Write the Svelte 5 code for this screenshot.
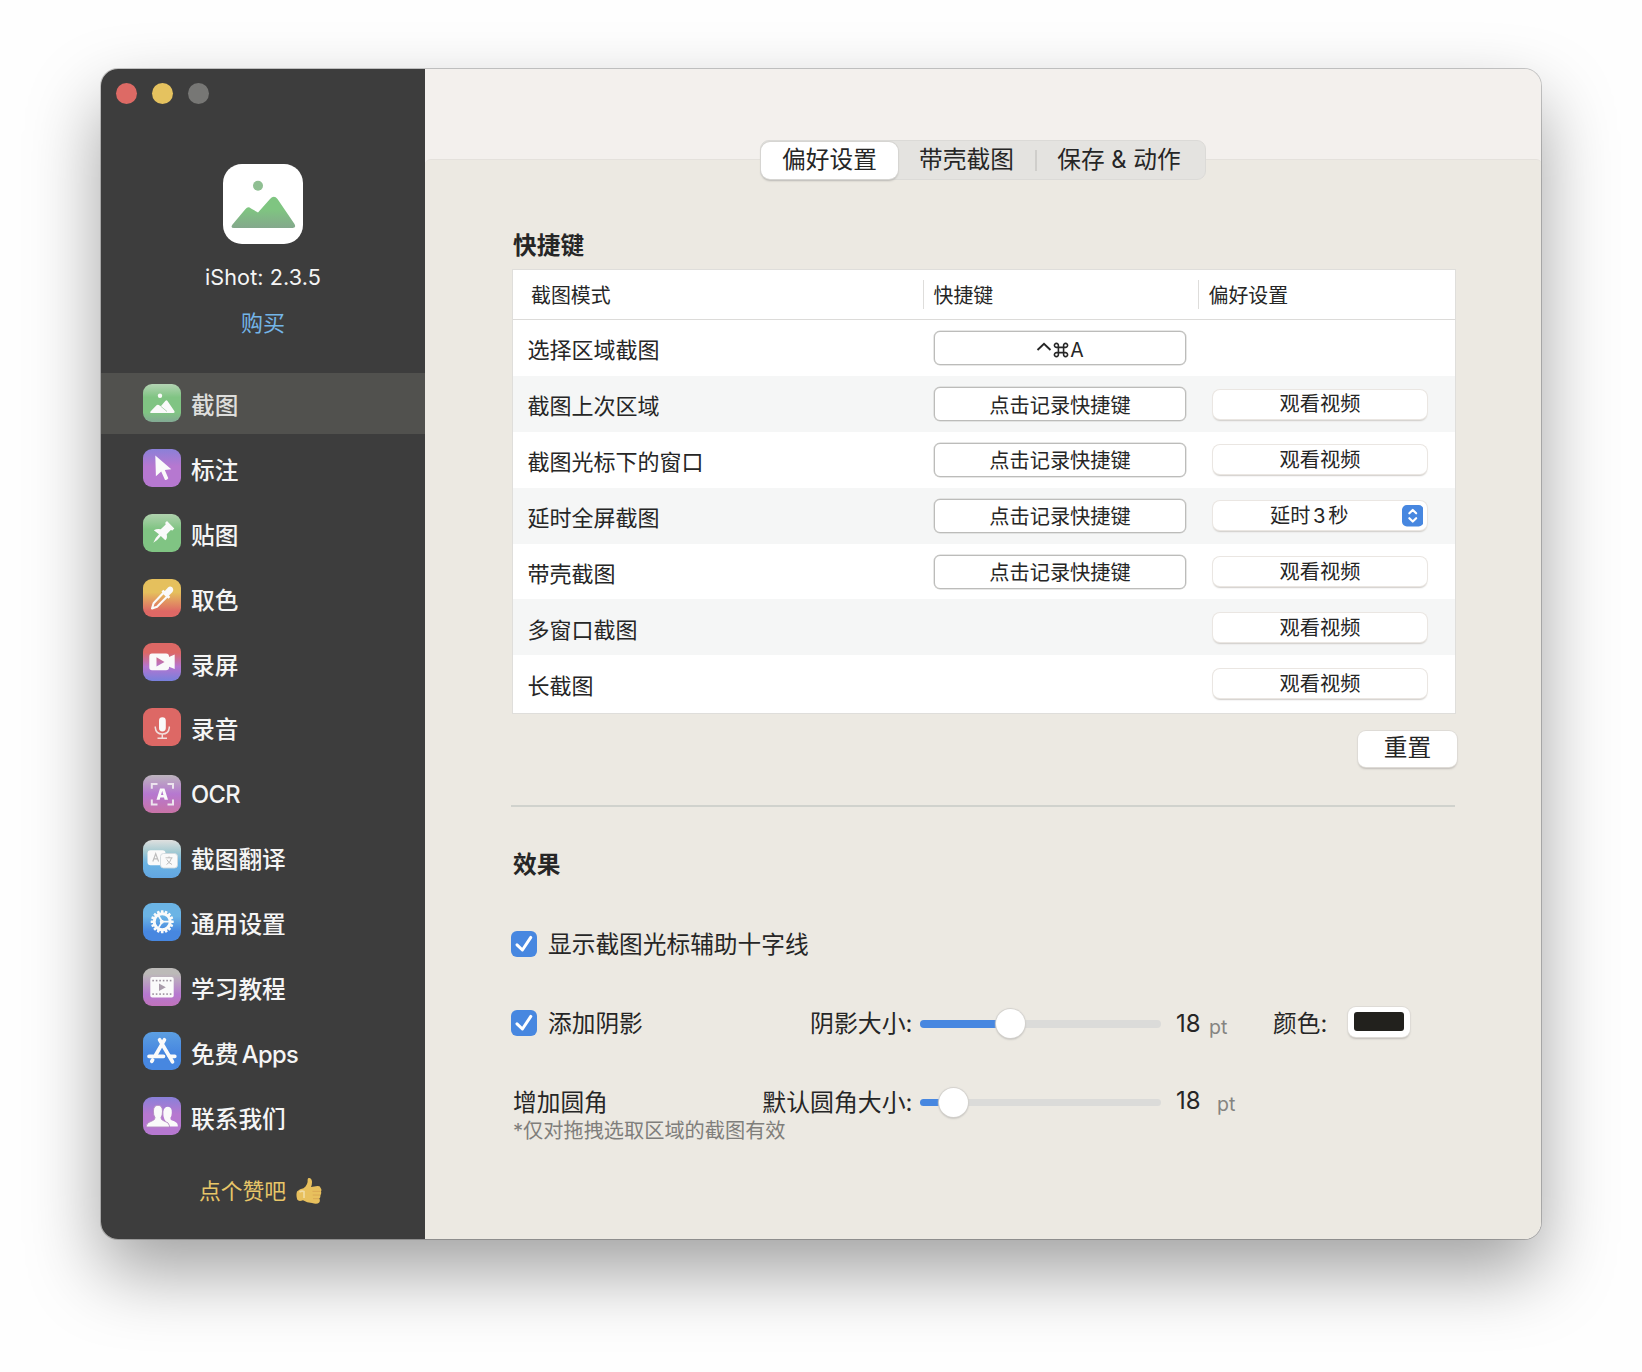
<script>
  const nav = [
    { id: 'shot', label: '截图' },
    { id: 'mark', label: '标注' },
    { id: 'pin', label: '贴图' },
    { id: 'pick', label: '取色' },
    { id: 'video', label: '录屏' },
    { id: 'mic', label: '录音' },
    { id: 'ocr', label: '', latin: 'OCR' },
    { id: 'trans', label: '截图翻译' },
    { id: 'gear', label: '通用设置' },
    { id: 'film', label: '学习教程' },
    { id: 'apps', label: '免费 ', latin: 'Apps' },
    { id: 'people', label: '联系我们' }
  ];
  const record = '点击记录快捷键';
  const rows = [
    { name: '选择区域截图', key: '^⌘A', pref: '' },
    { name: '截图上次区域', key: record, pref: 'video' },
    { name: '截图光标下的窗口', key: record, pref: 'video' },
    { name: '延时全屏截图', key: record, pref: 'select' },
    { name: '带壳截图', key: record, pref: 'video' },
    { name: '多窗口截图', key: '', pref: 'video' },
    { name: '长截图', key: '', pref: 'video' }
  ];
  const teeth = Array.from({ length: 16 }, (_, i) => i * 22.5);
  const holes = [9.3, 12.8, 16.3, 19.8, 23.3, 26.8];
  let active = $state('shot');
  let crosshair = $state(true);
  let shadow = $state(true);
</script>

{#snippet tick()}
  <svg viewBox="0 0 26 26"><path d="M6 13.800 L11.400 19 L19.800 6.400" fill="none" stroke="#fff" stroke-width="3" stroke-linecap="round" stroke-linejoin="round" /></svg>
{/snippet}

{#snippet slider(pos)}
  <div class="slider">
    <div class="fill" style:width="{pos}px"></div>
    <div class="thumb" style:left="{pos}px"></div>
  </div>
{/snippet}

<div class="desktop">
<div class="window">
  <aside>
    <div class="lights"><i class="red"></i><i class="yellow"></i><i class="grey"></i></div>
    <svg class="logo" viewBox="0 0 80 80">
      <defs>
        <linearGradient id="hill" x1="0" y1="0" x2="0" y2="1"><stop offset="0.4" stop-color="#7fc581" /><stop offset="1" stop-color="#84a88c" /></linearGradient>
      </defs>
      <rect width="80" height="80" rx="19" fill="#fff" />
      <circle cx="35" cy="21.800" r="5" fill="#8fbf92" />
      <path d="M11 64 Q7 64 9.500 60.500 L22.500 45 Q25 42 28 44.500 L35 48.500 L47 35 Q51 30.500 54.500 35 L71.500 60 Q73.500 64 69.500 64 Z" fill="url(#hill)" />
    </svg>
    <div class="version">iShot: 2.3.5</div>
    <div class="buy">购买</div>
    <nav>
      {#each nav as item}
        <button class="item" class:active={active === item.id} onclick={() => (active = item.id)}>
          <span class="icon {item.id}">
            <svg viewBox="0 0 38 38" fill="#fafafa">
              {#if item.id === 'shot'}
                <circle cx="17" cy="11.800" r="2.200" />
                <path d="M8 29 Q6.500 29 7.500 27.500 L13.500 21.200 Q14.500 20.300 15.700 21 L17.800 22.300 L22.500 16.800 Q23.500 15.800 24.500 17 L31.500 27.300 Q32 29 30.500 29 Z" />
                <path d="M17.800 22.300 L24 27.500" stroke="#a9cfaa" stroke-width="0.900" />
              {:else if item.id === 'mark'}
                <path d="M12.300 6.500 L28.300 20.300 L21.800 20.900 L25.300 29.300 Q23.800 31.600 21.900 30.700 L18.200 22.600 L12.900 27.200 Z" />
              {:else if item.id === 'pin'}
                <path d="M24 7 L31.300 14.500 L29.500 16.400 L27.800 16 L23.700 20.200 Q24.700 24.500 22.300 26.300 L17.800 22 Q14.500 26.500 10.300 28.800 Q11.700 24.300 16 20.300 L10.800 16.300 Q14 14.300 17.700 15.200 L22.700 10.500 L22.200 8.800 Z" />
              {:else if item.id === 'pick'}
                <path d="M9 29.500 L10.600 24.300 L20.500 13.800 L24.200 17.500 L14 27.700 Z" fill="none" stroke="#fafafa" stroke-width="2.100" stroke-linejoin="round" />
                <path d="M18.500 12.500 L20.300 10.800 L21.800 12 L25 8.400 Q27 6.500 29.200 8.300 Q31.200 10.800 29.500 13 L26 16.600 L27.300 18 L25.400 19.800 Z" />
              {:else if item.id === 'video'}
                <path fill-rule="evenodd" d="M9 10.500 H23 Q26 10.500 26 13.500 V14 L31.700 11.500 V26 L26 23.800 V24.500 Q26 27.300 23 27.300 H9 Q6.300 27.300 6.300 24.500 V13.500 Q6.300 10.500 9 10.500 Z M13.500 14.300 V23.500 L21.500 18.900 Z" />
              {:else if item.id === 'mic'}
                <rect x="16" y="9.300" width="6.800" height="14.200" rx="3.400" />
                <path d="M12.300 18.500 V19.600 Q12.800 26 19.300 26 Q25.800 26 26.300 19.600 V18.500 M19.300 26 V30 M14.500 30.300 H24" fill="none" stroke="#f1dedd" stroke-width="1.500" />
              {:else if item.id === 'ocr'}
                <path d="M8.800 13.800 V9 H14.500 M24.500 9 H30 V13.800 M8.800 24.500 V29.500 H14.500 M24.500 29.500 H30 V24.500" fill="none" stroke="#ece4ee" stroke-width="2" />
                <path fill-rule="evenodd" d="M17 13.500 H21.500 L25 24.800 H21.600 L21 22.500 H17.300 L16.700 24.800 H13.500 Z M18 20 H20.400 L19.200 15.800 Z" />
              {:else if item.id === 'trans'}
                <rect x="4.500" y="10.300" width="18" height="15" rx="3" />
                <path d="M9.800 21.500 L12.700 13.700 L15.600 21.500 M10.800 18.900 H14.600" fill="none" stroke="#bcbcbc" stroke-width="1.100" />
                <rect x="17.500" y="13.500" width="17" height="14.500" rx="3" stroke="#cfd8dc" stroke-width="0.900" />
                <path d="M22.500 17.800 H29.500 M26 16.500 V17.800 M23.500 24.500 Q27.500 22.500 28.500 18 M23.800 19.500 Q25.500 23 29 24.500" fill="none" stroke="#bcbcbc" stroke-width="1" />
              {:else if item.id === 'gear'}
                {#each teeth as a}
                  <rect x="17.900" y="7.200" width="2.600" height="4" rx="0.500" transform="rotate({a} 19.200 18.700)" />
                {/each}
                <circle cx="19.200" cy="18.700" r="8" fill="none" stroke="#fafafa" stroke-width="3" />
                <path d="M19.200 18.700 H27 M19.200 18.700 L15 11.800 M19.200 18.700 L15 25.600" stroke="#fafafa" stroke-width="1.700" />
                <circle cx="18.800" cy="18.700" r="2" />
              {:else if item.id === 'film'}
                <rect x="7.300" y="9" width="23.400" height="20.600" rx="2" />
                {#each holes as x}
                  <rect {x} y="11.800" width="1.600" height="1.600" fill="#9a8f9c" />
                  <rect {x} y="25.300" width="1.600" height="1.600" fill="#9a8f9c" />
                {/each}
                <path d="M16 15.500 L22.800 19.300 L16 23 Z" fill="#a99cab" />
              {:else if item.id === 'apps'}
                <g fill="none" stroke="#fafafa" stroke-width="3.700" stroke-linecap="round">
                  <path d="M21.400 7.800 L12.700 23" /><path d="M16.600 7.800 L29.500 29.800" />
                  <path d="M6 24.300 H20.500 M26.500 24.300 H31.800" /><path d="M9.600 28 L8.800 29.300" />
                </g>
              {:else}
                <path d="M20 29.600 Q25 26 21.500 22.500 Q20 19.500 20.300 14.700 Q21 9.800 25 9.800 Q29.200 10 28.800 16 Q28.700 19 27.500 20.500 Q27 22.500 28.500 23.300 Q34.800 25 34.800 28.500 V29.600 Z" />
                <path d="M3.300 30 V28.800 Q3.500 25.500 9.500 23.700 Q12.200 22.700 12 20.500 Q10.300 18.500 10.400 14 Q10.600 8.300 15 8.300 Q19.300 8.300 19.500 14 Q19.600 18.500 18 20.500 Q17.800 22.700 20.500 23.700 Q26.500 25.500 26.500 28.800 V30 Z" stroke="#b18abf" stroke-width="0.900" />
              {/if}
            </svg>
          </span>
          <span class="label">{item.label}{#if item.latin}<span class="latin">{item.latin}</span>{/if}</span>
        </button>
      {/each}
    </nav>
    <div class="praise">
      <span>点个赞吧</span>
      <svg viewBox="0 0 26 28">
        <path d="M12.500 1 Q15.500 0.500 16 4.500 Q16.200 7.500 15 10 L21.500 9 Q24.500 8.800 24.600 11 Q26 12.500 25 14.500 Q25.700 16.500 24.400 18.200 Q24.700 20.300 23.300 21.500 Q24.500 23.800 23.200 25.400 Q21 27.600 16 26 Q11 25.800 7 23.300 Q2.500 24.800 1.200 22.500 Q-0.200 18 1 14.500 Q4 11.500 7.500 11.300 Q12 7.500 11.600 3.500 Q11.500 1.500 12.500 1 Z" fill="#e8c05d" />
        <path d="M16.500 14.300 H24.500 M16.700 18 H24 M17 21.700 H23" stroke="#d8a552" stroke-width="0.900" fill="none" />
        <path d="M3.500 15 Q6 13.500 8 14.500 V21" stroke="#f1dca4" stroke-width="1.600" fill="none" />
      </svg>
    </div>
  </aside>

  <main>
    <div class="titlebar"></div>
    <div class="panel">
      <div class="tabs">
        <button class="tab on">偏好设置</button>
        <button class="tab">带壳截图</button>
        <i></i>
        <button class="tab last">保存 &amp; 动作</button>
      </div>

      <h2>快捷键</h2>
      <div class="table">
        <div class="row head">
          <div class="c1">截图模式</div>
          <div class="c2">快捷键</div>
          <div class="c3">偏好设置</div>
        </div>
        {#each rows as r}
          <div class="row">
            <div class="c1">{r.name}</div>
            <div class="c2">
              {#if r.key === record}
                <button class="field">{r.key}</button>
              {:else if r.key}
                <button class="field combo">
                  <svg viewBox="0 0 16 20"><path d="M1.500 10 L8 3.800 L14.500 10" fill="none" stroke="#262626" stroke-width="1.900" /></svg>
                  <svg viewBox="0 0 16 20"><path d="M5.400 7.400 H10.600 V12.600 H5.400 Z M5.400 7.400 H3.700 A2 2 0 1 1 5.400 5.600 Z M10.600 7.400 V5.600 A2 2 0 1 1 12.300 7.400 Z M10.600 12.600 H12.300 A2 2 0 1 1 10.600 14.400 Z M5.400 12.600 V14.400 A2 2 0 1 1 3.700 12.600 Z" fill="none" stroke="#262626" stroke-width="1.600" /></svg>
                  <span>A</span>
                </button>
              {/if}
            </div>
            <div class="c3">
              {#if r.pref === 'video'}
                <button class="push">观看视频</button>
              {:else if r.pref === 'select'}
                <button class="push select">
                  <span>延时 3 秒</span>
                  <svg viewBox="0 0 22 22"><rect width="22" height="22" rx="5" fill="#4787e0" /><path d="M7.500 8.500 L11 5 L14.500 8.500 M7.500 13.500 L11 17 L14.500 13.500" fill="none" stroke="#fff" stroke-width="2.200" stroke-linecap="round" stroke-linejoin="round" /></svg>
                </button>
              {/if}
            </div>
          </div>
        {/each}
      </div>
      <button class="reset">重置</button>
      <hr />

      <h2 class="effects">效果</h2>
      <div class="line first">
        <button class="check" aria-label="crosshair" onclick={() => (crosshair = !crosshair)}>{#if crosshair}{@render tick()}{/if}</button>
        <span>显示截图光标辅助十字线</span>
      </div>
      <div class="line second">
        <div class="lead">
          <button class="check" aria-label="shadow" onclick={() => (shadow = !shadow)}>{#if shadow}{@render tick()}{/if}</button>
          <span>添加阴影</span>
        </div>
        <span class="caption">阴影大小:</span>
        {@render slider(91)}
        <span class="num">18</span>
        <span class="pt">pt</span>
        <span class="colour">颜色:</span>
        <div class="well"><i></i></div>
      </div>
      <div class="line third">
        <div class="lead">增加圆角</div>
        <span class="caption">默认圆角大小:</span>
        {@render slider(33.5)}
        <span class="num raised">18</span>
        <span class="pt wide">pt</span>
      </div>
      <p>*仅对拖拽选取区域的截图有效</p>
    </div>
  </main>
</div>
</div>

<style>
  :global(body) { margin: 0; background: #fefefe; }
  * { box-sizing: border-box; }
  button { border: 0; padding: 0; margin: 0; background: none; font: inherit; color: inherit; display: flex; align-items: center; }
  svg { display: block; flex: none; }
  .desktop { width: 1642px; height: 1372px; padding: 69px 0 0 101px; overflow: hidden; background: #fefefe; }
  .window {
    width: 1440px; height: 1170px; display: flex; overflow: hidden;
    border-radius: 17px; background: #ece9e2; color: #262626;
    font-family: Inter, "Noto Sans CJK SC", sans-serif; font-size: 23.700px; line-height: 30px; white-space: nowrap;
    box-shadow: 0 0 0 1px rgba(0, 0, 0, 0.200), 0 33px 72px rgba(0, 0, 0, 0.370);
  }
  aside { width: 324px; flex: none; background: #3d3d3d; color: #f5f5f5; display: flex; flex-direction: column; align-items: center; }
  .lights { align-self: flex-start; display: flex; gap: 15px; padding: 14px 0 0 14.500px; height: 95px; }
  .lights i { width: 21px; height: 21px; border-radius: 50%; }
  .red { background: #dd6a65; }
  .yellow { background: #e5c25f; }
  .grey { background: #777775; }
  .logo { width: 80px; height: 80px; }
  .version { margin-top: 17.500px; font-size: 21.600px; letter-spacing: 0.100px; }
  .buy { margin-top: 16.500px; font-size: 22px; color: #74b5e8; }
  nav { width: 100%; margin-top: 35px; display: flex; flex-direction: column; gap: 3.850px; font-weight: 500; }
  .item { height: 61px; padding-left: 42px; gap: 10px; text-align: left; }
  .label { padding-top: 5.500px; word-spacing: -3px; }
  .latin { letter-spacing: -0.600px; }
  .active { background: #51514e; color: #dededc; }
  .icon { width: 38px; height: 38px; border-radius: 9px; overflow: hidden; margin-bottom: 1px; }
  .shot { background: linear-gradient(#b4d4b4, #80c483 35%, #80c483 75%, #83a994); }
  .mark { background: linear-gradient(#8b80d8, #b678d0 45%); }
  .pin { background: linear-gradient(#b0d2ae, #80c483 40%); }
  .pick { background: linear-gradient(#e5c05d 35%, #de6865 85%); }
  .video { background: linear-gradient(#dd6865 25%, #b575cf 62%, #7780dc); }
  .mic { background: #dd6865; }
  .ocr { background: linear-gradient(#bdb5be, #b678d0 50%, #c873a6); }
  .trans { background: linear-gradient(#dfe0df, #a6cbd2 30%, #6bb4e3 60%, #62a6e2); }
  .ocr, .trans { margin: 3px 0 0; }
  .gear { background: linear-gradient(#6bb4e5 35%, #4787e0 75%); }
  .film { background: linear-gradient(#bcbab8 15%, #b678d0 70%, #c073bb); }
  .apps { background: linear-gradient(#5c9fe2, #4787e0 55%); }
  .people { background: linear-gradient(#8980d9, #b678d0 45%); }
  .praise { display: flex; align-items: center; gap: 10px; margin-top: 29px; padding-right: 5px; font-size: 21.800px; color: #e8c668; }
  .praise svg { width: 26px; height: 28px; }

  main { flex: 1; display: flex; flex-direction: column; background: #f3f0ed; }
  .titlebar { height: 90px; flex: none; }
  .panel { flex: 1; background: #ece9e2; border-top: 1px solid #e4e1dc; border-radius: 6px 6px 0 0; display: flex; flex-direction: column; padding: 0 86px 0 88px; }
  .tabs { margin: -20px 0 0 247px; width: 446px; height: 40px; display: flex; align-items: center; border-radius: 9px; background: #e4e3e0; border: 1px solid #dbdad7; flex: none; }
  .tab { height: 37px; width: 137px; justify-content: center; border-radius: 9px; }
  .tab.on { background: #fff; box-shadow: 0 0 0 1px #d6d5d2, 0 1.500px 2px #b9b7b3; }
  .tabs i { width: 1.500px; height: 21px; background: #cfcecb; }
  .tab.last { width: 165px; }
  h2 { margin: 51px 0 0; font-size: 23.700px; line-height: 30px; font-weight: 700; }
  .table { margin: 8px 0 0 -1px; width: 944px; height: 445px; background: #fff; border: 1px solid #dfdedb; flex: none; font-size: 22px; }
  .row { height: 55.900px; display: grid; grid-template-columns: 409.500px 275px 257px; align-items: center; }
  .row:nth-child(odd):not(.head) { background: #f5f6f6; }
  .row .c1 { padding: 5px 0 0 14.500px; }
  .row .c2 { padding: 0.500px 0 0 11.500px; }
  .row .c3 { padding: 0.500px 0 0 15.500px; }
  .head { height: 50px; font-size: 19.900px; border-bottom: 1.500px solid #dcdbd9; }
  .row.head .c1 { padding: 3px 0 0 18px; }
  .row.head .c2, .row.head .c3 { height: 29px; padding: 1px 0 0 10px; border-left: 1.500px solid #dedddb; }
  .field { width: 252px; height: 34px; justify-content: center; padding-top: 3px; border: 1.500px solid #bcbcba; border-radius: 6px; background: #fff; font-size: 20.200px; box-shadow: 0 0 0 0.500px #cfcfcd; }
  .combo { gap: 1px; font-size: 19.500px; }
  .combo svg { width: 16px; height: 20px; }
  .push { width: 214px; height: 29px; justify-content: center; border-radius: 7px; background: #fff; font-size: 20.200px; box-shadow: 0 0 0 1px #eae6e2, 0 1.500px 1.500px #cfccc8; }
  .select { padding-left: 57px; padding-right: 4px; justify-content: space-between; word-spacing: -3px; }
  .select svg { width: 21.500px; height: 21.500px; }
  .reset { align-self: flex-end; margin: 17px -1px 0 0; width: 99px; height: 36px; justify-content: center; padding-bottom: 3px; border-radius: 8px; background: #fff; box-shadow: 0 0 0 1px #dedbd6, 0 2px 2px #bfbcb7; flex: none; }
  hr { width: 944px; height: 1.500px; margin: 38px 0 0 -2px; border: 0; background: #d0d2cd; flex: none; }
  h2.effects { margin-top: 43px; }
  .line { display: flex; align-items: center; height: 30px; flex: none; }
  .check { width: 26px; height: 26px; margin: 0 11px 3px -2px; border-radius: 6px; background: #4787e0; flex: none; }
  .check svg { width: 26px; height: 26px; }
  .first { margin-top: 50.500px; }
  .second { margin-top: 49px; }
  .third { margin-top: 48.500px; }
  .lead { width: 200px; display: flex; align-items: center; }
  .caption { width: 199.500px; margin-right: 7px; display: flex; justify-content: flex-end; font-size: 23.900px; }
  .slider { position: relative; width: 241.500px; height: 7.500px; border-radius: 4px; background: #dbdbd9; }
  .fill { height: 7.500px; border-radius: 4px; background: #4787e0; }
  .thumb { position: absolute; top: -11px; width: 29px; height: 29px; margin-left: -14.500px; border-radius: 50%; background: #fff; box-shadow: 0 0 1px 1px #d3d1cd, 0 1.500px 2px #bbb9b5; }
  .num { width: 31px; margin-left: 15px; font-size: 24px; }
  .raised { padding-bottom: 3px; }
  .pt { font-size: 19.500px; color: #858481; padding: 6px 0 0 2px; width: 66px; }
  .wide { padding: 3px 0 0 10px; }
  .colour { width: 54px; }
  .well { width: 62px; height: 30px; margin: 0 0 4px 21px; padding: 5px 6px; border-radius: 8px; background: #fff; box-shadow: 0 0 0 1px #dedbd6, 0 1.500px 2px #bfbcb7; }
  .well i { display: block; height: 19px; border-radius: 3px; background: #22211d; }
  p { margin: 0; font-size: 20.200px; line-height: 26px; color: #7f7e7b; }
</style>
